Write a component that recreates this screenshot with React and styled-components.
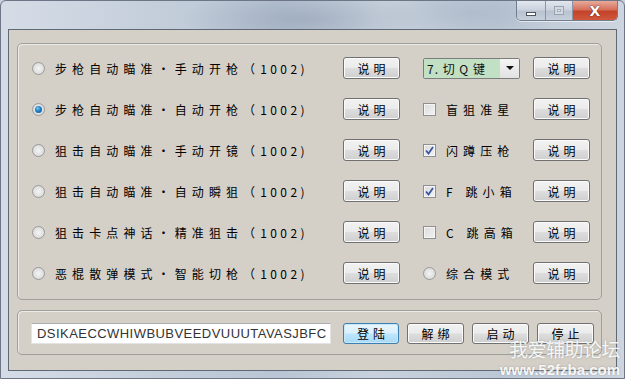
import React from 'react';
import styled, { createGlobalStyle } from 'styled-components';

const GlobalStyle = createGlobalStyle`
  html, body {
    margin: 0;
    padding: 0;
    background: #c7d1de;
  }
  * {
    box-sizing: border-box;
  }
`;

const cjk = `"Noto Sans CJK SC", "Noto Sans", sans-serif`;

const Window = styled.div`
  position: relative;
  width: 625px;
  height: 379px;
  overflow: hidden;
  display: flex;
  flex-direction: column;
  background:
    radial-gradient(ellipse 120px 30px at 300px 18px, rgba(140, 155, 175, 0.55), transparent),
    radial-gradient(ellipse 90px 25px at 470px 12px, rgba(150, 165, 185, 0.35), transparent),
    linear-gradient(90deg, #d5dce6 0%, #c4cedb 25%, #b9c5d4 45%, #c8d1dd 60%, #bcc7d5 80%, #cdd5e0 100%);
  border: 1px solid #6c7686;
  border-radius: 6px 6px 0 0;
`;

const TitleBar = styled.div`
  height: 28px;
  flex-shrink: 0;
  display: flex;
  justify-content: flex-end;
  align-items: flex-start;
  padding-right: 6px;
`;

const CaptionGroup = styled.div`
  display: flex;
  height: 20px;
  border: 1px solid #727e8f;
  border-top: none;
  border-radius: 0 0 5px 5px;
  overflow: hidden;
  box-shadow: 0 1px 0 rgba(255, 255, 255, 0.6);
`;

const CaptionButton = styled.div`
  width: ${p => p.$w}px;
  height: 100%;
  display: flex;
  align-items: center;
  justify-content: center;
  border-left: ${p => (p.$first ? 'none' : '1px solid #8a95a5')};
  background: ${p =>
    p.$close
      ? 'linear-gradient(180deg, #e9a99a 0%, #d5715c 45%, #c2432a 55%, #d0583c 100%)'
      : 'linear-gradient(180deg, #e2e7ee 0%, #cbd3de 45%, #b9c3d1 55%, #c6cfdb 100%)'};
`;

const MinGlyph = styled.div`
  width: 10px;
  height: 4px;
  margin-top: 6px;
  background: #fff;
  border: 1px solid #4d5563;
`;

const MaxGlyph = styled.div`
  width: 10px;
  height: 9px;
  border: 1px solid #9aa3b0;
  background: #e6eaf0;
  box-shadow: inset 0 0 0 2px #d3d9e2, inset 0 0 0 3px #a5aebb;
`;

const CloseGlyph = styled.span`
  font-family: "DejaVu Sans", sans-serif;
  font-weight: bold;
  font-size: 14px;
  line-height: 1;
  color: #fff;
  text-shadow: 0 0 1px #5a1a10, 0 0 1px #5a1a10;
`;

const Client = styled.div`
  margin: 0 7px 7px 7px;
  flex: 1;
  background: #d4d0c8;
  border: 1px solid #5f6976;
  padding: 13px 14px 0 8px;
  display: flex;
  flex-direction: column;
  gap: 10px;
`;

const GroupBox = styled.div`
  border: 1px solid #a19f99;
  border-radius: 5px;
  box-shadow: inset 1px 1px 0 #ecebe7;
  padding: ${p => p.$pad};
`;

const OptionGrid = styled.div`
  display: grid;
  grid-template-columns: 311px 57px 133px 57px;
  grid-auto-rows: 22px;
  row-gap: 19px;
  align-items: center;
`;

const Choice = styled.label`
  display: flex;
  align-items: center;
  gap: 10px;
  padding-left: ${p => p.$indent || 0}px;
  font-family: ${cjk};
  font-size: 12px;
  letter-spacing: 5.1px;
  color: #000;
  white-space: nowrap;
`;

const Code = styled.span`
  letter-spacing: 3.4px;
`;

const Radio = styled.span`
  width: 13px;
  height: 13px;
  flex-shrink: 0;
  border-radius: 50%;
  border: 1px solid #9a9a9a;
  background: radial-gradient(circle at 50% 50%, #f4f4f4 0%, #e0e0e0 60%, #cfcfcf 100%);
  display: flex;
  align-items: center;
  justify-content: center;
  &::after {
    content: '';
    width: 7px;
    height: 7px;
    border-radius: 50%;
    display: ${p => (p.$on ? 'block' : 'none')};
    background: radial-gradient(circle at 40% 35%, #7fc6f2 0%, #1b7fc6 45%, #0b4f8a 100%);
  }
`;

const Check = styled.span`
  width: 13px;
  height: 13px;
  flex-shrink: 0;
  border: 1px solid #8f8f8f;
  background: linear-gradient(135deg, #dcdcdc 0%, #f2f2f2 100%);
  box-shadow: inset 0 0 0 1px #f5f5f5;
  display: flex;
  align-items: center;
  justify-content: center;
`;

const Combo = styled.div`
  margin-left: 23px;
  width: 97px;
  height: 21px;
  display: flex;
  border: 1px solid #7d7d7d;
  border-radius: 2px;
  background: #f0f0f0;
  overflow: hidden;
`;

const ComboText = styled.div`
  flex: 1;
  min-width: 0;
  overflow: hidden;
  background: #c2e0c4;
  font-family: ${cjk};
  font-size: 12px;
  letter-spacing: 1px;
  line-height: 19px;
  padding-left: 3px;
  color: #111;
  white-space: pre;
`;

const ComboArrow = styled.div`
  width: 19px;
  flex-shrink: 0;
  display: flex;
  align-items: center;
  justify-content: center;
  background: linear-gradient(180deg, #f4f4f4, #e2e2e2);
  &::after {
    content: '';
    border-left: 4px solid transparent;
    border-right: 4px solid transparent;
    border-top: 4px solid #111;
  }
`;

const Button = styled.button`
  width: ${p => p.$w || 57}px;
  height: ${p => p.$h || 22}px;
  padding: 0;
  border: 1px solid ${p => (p.$focus ? '#3c7fb1' : '#707070')};
  border-radius: 3px;
  background: ${p =>
    p.$focus
      ? 'linear-gradient(180deg, #eaf6fd 0%, #d9f0fc 48%, #bee6fd 52%, #a7d9f5 100%)'
      : 'linear-gradient(180deg, #f2f2f2 0%, #ebebeb 48%, #dddddd 52%, #cfcfcf 100%)'};
  box-shadow: inset 0 0 0 1px ${p => (p.$focus ? '#c9e9fb' : '#fbfbfb')};
  font-family: ${cjk};
  font-size: 12px;
  letter-spacing: 4px;
  text-indent: 4px;
  color: #000;
  cursor: default;
`;

const LoginRow = styled.div`
  display: flex;
  align-items: center;
  gap: 8px;
`;

const KeyField = styled.div`
  width: 300px;
  height: 21px;
  margin-right: 4px;
  background: #fff;
  border: 1px solid #e3e3e3;
  border-top-color: #abadb3;
  font-family: "Liberation Sans", Arial, sans-serif;
  font-size: 13px;
  letter-spacing: 0.45px;
  line-height: 19px;
  padding-left: 5px;
  color: #333;
  white-space: nowrap;
  overflow: hidden;
`;

const Watermark = styled.div`
  position: absolute;
  right: 4px;
  bottom: 0px;
  display: flex;
  flex-direction: column;
  align-items: flex-end;
  color: rgba(255, 255, 255, 0.92);
  text-shadow: 0 0 2px rgba(120, 120, 120, 0.6);
  pointer-events: none;
`;

const WatermarkTitle = styled.div`
  font-family: ${cjk};
  font-size: 19px;
  line-height: 24px;
  letter-spacing: -0.5px;
`;

const WatermarkUrl = styled.div`
  font-family: "Liberation Sans", Arial, sans-serif;
  font-weight: bold;
  font-size: 15px;
  line-height: 17px;
`;

function CheckMark() {
  return (
    <svg width="9" height="9" viewBox="0 0 9 9">
      <path d="M1 4.5 L3.5 7.5 L8 1" fill="none" stroke="#3a55a5" strokeWidth="1.8" />
    </svg>
  );
}

const rows = [
  { label: '步枪自动瞄准・手动开枪', on: false, extra: { kind: 'combo', text: '7. 切 Q 键' } },
  { label: '步枪自动瞄准・自动开枪', on: true, extra: { kind: 'check', text: '盲狙准星', on: false } },
  { label: '狙击自动瞄准・手动开镜', on: false, extra: { kind: 'check', text: '闪蹲压枪', on: true } },
  { label: '狙击自动瞄准・自动瞬狙', on: false, extra: { kind: 'check', text: 'F 跳小箱', on: true } },
  { label: '狙击卡点神话・精准狙击', on: false, extra: { kind: 'check', text: 'C 跳高箱', on: false } },
  { label: '恶棍散弹模式・智能切枪', on: false, extra: { kind: 'radio', text: '综合模式', on: false } },
];

function Extra({ item }) {
  if (item.kind === 'combo') {
    return (
      <Combo>
        <ComboText>{item.text}</ComboText>
        <ComboArrow />
      </Combo>
    );
  }
  return (
    <Choice $indent={23}>
      {item.kind === 'check' ? <Check>{item.on && <CheckMark />}</Check> : <Radio $on={item.on} />}
      {item.text}
    </Choice>
  );
}

export default function App() {
  return (
    <>
      <GlobalStyle />
      <Window>
        <TitleBar>
          <CaptionGroup>
            <CaptionButton $w={28} $first>
              <MinGlyph />
            </CaptionButton>
            <CaptionButton $w={27}>
              <MaxGlyph />
            </CaptionButton>
            <CaptionButton $w={45} $close>
              <CloseGlyph>X</CloseGlyph>
            </CaptionButton>
          </CaptionGroup>
        </TitleBar>
        <Client>
          <GroupBox $pad="13px 0 15px 14px">
            <OptionGrid>
              {rows.map((r, i) => (
                <React.Fragment key={i}>
                  <Choice>
                    <Radio $on={r.on} />
                    <span>
                      {r.label}（<Code>1002)</Code>
                    </span>
                  </Choice>
                  <Button>说明</Button>
                  <Extra item={r.extra} />
                  <Button>说明</Button>
                </React.Fragment>
              ))}
            </OptionGrid>
          </GroupBox>
          <GroupBox $pad="12px 0 10px 13px">
            <LoginRow>
              <KeyField>DSIKAECCWHIWBUBVEEDVUUUTAVASJBFC</KeyField>
              <Button $w={56} $h={21} $focus>登陆</Button>
              <Button $w={57} $h={21}>解绑</Button>
              <Button $w={57} $h={21}>启动</Button>
              <Button $w={57} $h={21}>停止</Button>
            </LoginRow>
          </GroupBox>
        </Client>
        <Watermark>
          <WatermarkTitle>我爱辅助论坛</WatermarkTitle>
          <WatermarkUrl>www.52fzba.com</WatermarkUrl>
        </Watermark>
      </Window>
    </>
  );
}
